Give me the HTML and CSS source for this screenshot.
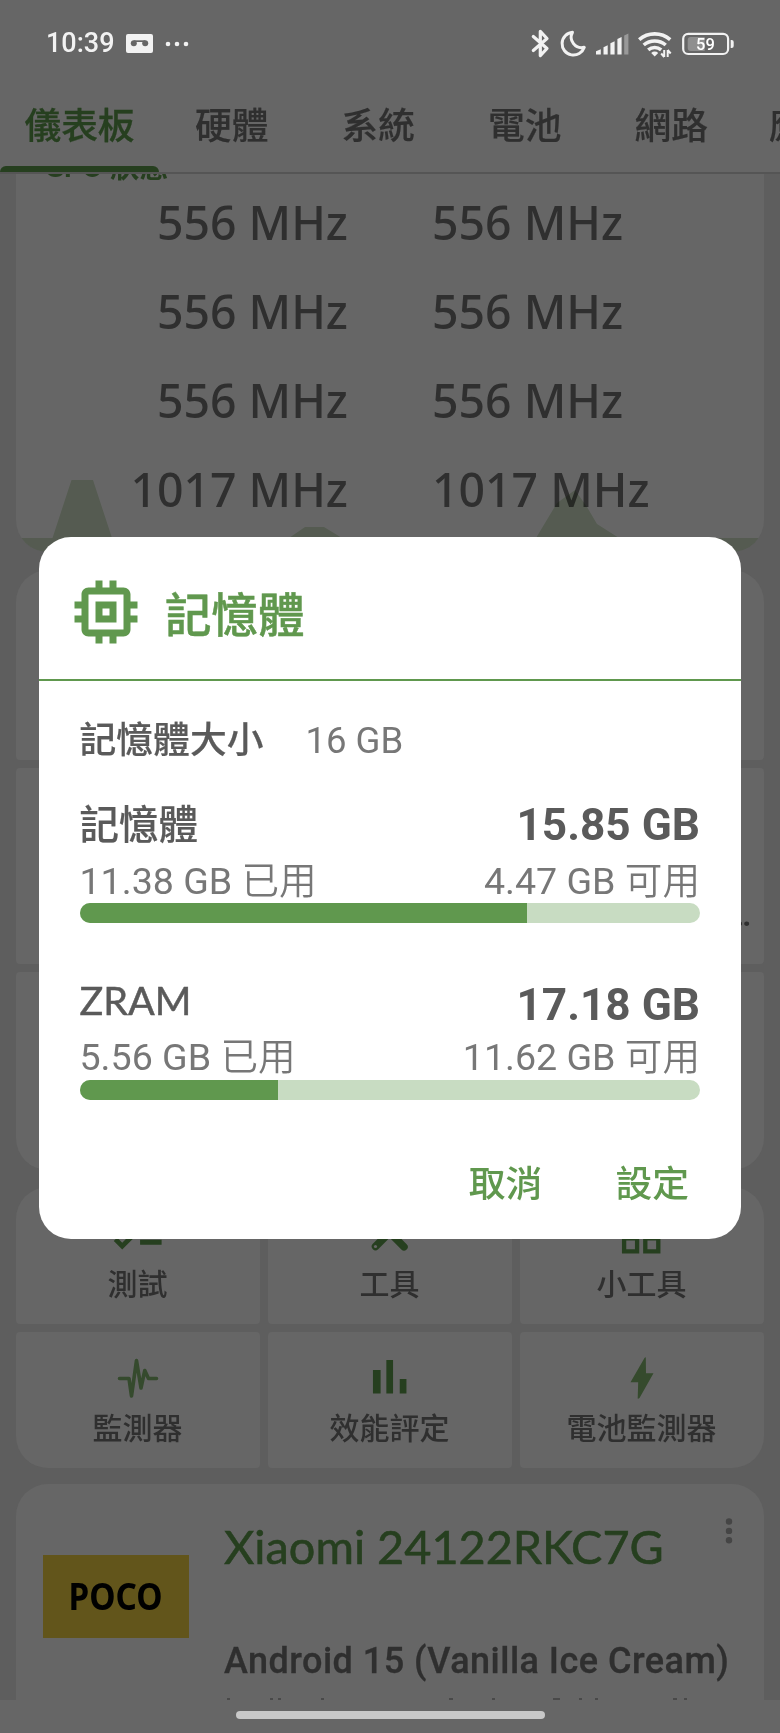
FILE: index.html
```html
<!DOCTYPE html>
<html lang="zh-Hant">
<head>
<meta charset="utf-8">
<title>記憶體</title>
<link rel="stylesheet" href="styles.css">
</head>
<body>
<div class="screen">
  <header class="statusbar">
    <span class="clock">10:39</span>
    <svg class="voicemail" width="27" height="19" viewBox="0 0 27 19"><rect width="27" height="19" rx="2" fill="#f2f2f2"/><g fill="#666"><circle cx="7.800" cy="9.300" r="3"/><circle cx="19.200" cy="9.300" r="3"/><path d="M7.800 6.300h11.400v1.700H7.800z"/></g></svg>
    <svg class="more" width="24" height="6" viewBox="0 0 24 6" fill="#f2f2f2"><circle cx="3" cy="3" r="2.300"/><circle cx="12" cy="3" r="2.300"/><circle cx="21" cy="3" r="2.300"/></svg>
    <svg class="tray" width="206" height="32" viewBox="0 0 206 32" fill="none">
      <path d="M4.300 8.500L18 20.500L11.300 27.600V3.400L18 10.500L4.300 22.500" stroke="#f2f2f2" stroke-width="3.200" stroke-linejoin="round" stroke-linecap="round"/>
      <path d="M43.500 4.300A11.400 11.400 0 1 0 55.300 19.300A10.400 10.400 0 0 1 43.500 4.300Z" stroke="#f2f2f2" stroke-width="3" stroke-linejoin="round"/>
      <path d="M67 26.500v-3.200l4.800-2v5.200zM74.500 26.500v-7.200l4.200-2v9.200zM81.400 26.500V15.300l4.200-2v13.200zM88.400 26.500V11l4.200-2v17.500z" fill="#f2f2f2"/>
      <path d="M95.200 26.500V7.600l4.200-2v20.900z" fill="#999"/>
      <g stroke="#f2f2f2" stroke-width="3.600"><path d="M110.200 11.700a23.500 23.500 0 0 1 31 0"/><path d="M114.700 17a17 17 0 0 1 22 0"/><path d="M119.200 21.800a10.500 10.500 0 0 1 13 0"/></g>
      <path d="M122.200 25a5 5 0 0 1 7 0L125.700 28.500z" fill="#f2f2f2"/>
      <path d="M135.200 29V22M132.200 25.500l3 3.500M138.700 22v7M138.700 22l3 3.500" stroke="#f2f2f2" stroke-width="2"/>
      <rect x="154.200" y="5.800" width="44.900" height="20.200" rx="5" stroke="#f2f2f2" stroke-width="2.200"/>
      <path d="M161.700 9h14v14h-14a3 3 0 0 1-3-3v-8a3 3 0 0 1 3-3z" fill="#8f8f8f"/>
      <path d="M201.700 12h1a2 2 0 0 1 2 2v4a2 2 0 0 1-2 2h-1z" fill="#f2f2f2"/>
      <text class="battery-text" x="176.400" y="22" text-anchor="middle">59</text>
    </svg>
  </header>
  <nav class="tabs">
    <div class="tab tab-active">儀表板</div>
    <div class="tab">硬體</div>
    <div class="tab">系統</div>
    <div class="tab">電池</div>
    <div class="tab">網路</div>
    <div class="tab tab-last">應用</div>
  </nav>
  <main class="content">
    <section class="card cpu">
      <h2 class="cpu-title"><span class="latin">CPU</span> 狀態</h2>
      <div class="cores">
        <span>556 MHz</span><span>556 MHz</span>
        <span>556 MHz</span><span>556 MHz</span>
        <span>556 MHz</span><span>556 MHz</span>
        <span>1017 MHz</span><span>1017 MHz</span>
      </div>
      <svg class="chart" width="748" height="82" viewBox="0 0 748 82"><path d="M0 67H36.500L55.500 9H77L96 67H273L289 56H308L326 67H520L541 32L559 19L571 36L581 53L603 67H748V82H0Z" fill="#d3e4c9"/></svg>
    </section>
    <section class="stack">
      <div class="card slot"></div>
      <div class="card slot slot-text">…</div>
      <div class="card slot"></div>
    </section>
    <section class="shortcuts">
      <div class="card shortcut"><svg class="icon" viewBox="0 0 24 24"><path d="M22 7h-9v2h9V7zm0 8h-9v2h9v-2zM5.540 11L2 7.460l1.410-1.410 2.120 2.120 4.240-4.240 1.410 1.410L5.540 11zm0 8L2 15.460l1.410-1.410 2.120 2.120 4.240-4.240 1.410 1.410L5.540 19z"/></svg><span>測試</span></div>
      <div class="card shortcut"><svg class="icon" viewBox="0 0 57.400 57.400"><path d="M14.500 42.500L43 14M43 42.800L15 14.500" stroke="#263f1f" stroke-width="7.500" stroke-linecap="round"/><circle cx="14.500" cy="42.500" r="1.600" fill="#666"/></svg><span>工具</span></div>
      <div class="card shortcut"><svg class="icon" viewBox="0 0 57.400 57.400"><path d="M11.100 13.400h13v13h-13zM32.300 13.400h13v13h-13zM11.100 34.400h13v13h-13zM32.300 34.400h13v13h-13z" fill="none" stroke="#263f1f" stroke-width="4.300"/></svg><span>小工具</span></div>
      <div class="card shortcut"><svg class="icon" viewBox="0 0 57.400 57.400"><path d="M10.500 30.500H20L22.500 48L27.500 12.500L32 40L35.800 22.500L39.500 30.500H47.500" fill="none" stroke="#354a2d" stroke-width="3.600" stroke-linejoin="round" stroke-linecap="round"/></svg><span>監測器</span></div>
      <div class="card shortcut"><svg class="icon" viewBox="0 0 24 24"><path d="M5 9.200h3.200V19H5zM10.600 5h2.800v14h-2.800zM16.200 13H19v6h-2.800z"/></svg><span>效能評定</span></div>
      <div class="card shortcut"><svg class="icon" viewBox="0 0 57.400 57.400"><path d="M31.500 10Q33 8.500 32.800 10.500L33 25.200H40.500L26.500 50Q24.500 51.500 24.700 50L25.200 34.200H17.500Z" fill="#354a2d"/></svg><span>電池監測器</span></div>
    </section>
    <section class="card device">
      <svg class="brand" width="146" height="83" viewBox="0 0 146 83"><rect width="146" height="83" fill="#62551b"/><text class="brand-text" x="25.500" y="55" textLength="94" lengthAdjust="spacingAndGlyphs">POCO</text></svg>
      <div class="device-info">
        <div class="device-name">Xiaomi 24122RKC7G</div>
        <div class="device-os">Android 15 (Vanilla Ice Cream)</div>
        <svg class="cut-line" width="500" height="2" viewBox="0 0 500 2"><path d="M3 1h3M46 1h3M54 1h3M97 1h3M225 1h4M268 1h3M329 1h7M355 1h3M371 1h3M449 1h4M460 1h3" stroke="#404040" stroke-width="1.500"/></svg>
      </div>
      <svg class="menu" width="8" height="28" viewBox="0 0 8 28" fill="#454545"><circle cx="4" cy="4.500" r="3.200"/><circle cx="4" cy="13.900" r="3.200"/><circle cx="4" cy="23.300" r="3.200"/></svg>
    </section>
  </main>
  <footer class="navbar"><div class="handle"></div></footer>

  <div class="dialog" role="dialog">
    <div class="dialog-head">
      <svg class="chip" width="84" height="84" viewBox="0 0 24 24"><path d="M15 9H9v6h6V9zm-2 4h-2v-2h2v2zm8-2V9h-2V7c0-1.100-.9-2-2-2h-2V3h-2v2h-2V3H9v2H7c-1.100 0-2 .9-2 2v2H3v2h2v2H3v2h2v2c0 1.100.9 2 2 2h2v2h2v-2h2v2h2v-2h2c1.100 0 2-.9 2-2v-2h2v-2h-2v-2h2zm-4 6H7V7h10v10z"/></svg>
      <span class="dialog-title">記憶體</span>
    </div>
    <div class="dialog-body">
      <div class="size-row"><span class="size-label">記憶體大小</span><span class="size-value">16 GB</span></div>
      <div class="meter meter-ram">
        <div class="meter-top"><span class="meter-name">記憶體</span><span class="meter-total">15.85 GB</span></div>
        <div class="meter-mid"><span>11.38 GB <span class="unit">已用</span></span><span>4.47 GB <span class="unit">可用</span></span></div>
        <div class="track"><div class="fill" style="width:72.1%"></div></div>
      </div>
      <div class="meter meter-zram">
        <div class="meter-top"><span class="meter-name meter-latin">ZRAM</span><span class="meter-total">17.18 GB</span></div>
        <div class="meter-mid"><span>5.56 GB <span class="unit">已用</span></span><span>11.62 GB <span class="unit">可用</span></span></div>
        <div class="track"><div class="fill" style="width:32%"></div></div>
      </div>
    </div>
    <div class="actions"><span>取消</span><span>設定</span></div>
  </div>
</div>
</body>
</html>
```

FILE: styles.css
```css
* { box-sizing: border-box; }
body { margin: 0; }
.screen {
  position: relative;
  display: flex;
  flex-direction: column;
  width: 780px;
  height: 1733px;
  overflow: hidden;
  background: #666;
  color: #2f2f2f;
  font-family: "Noto Sans CJK TC", sans-serif;
}
.statusbar {
  display: flex;
  align-items: center;
  height: 80px;
  padding: 7px 45px 0 46px;
  flex: none;
}
.clock {
  width: 80px;
  font: 500 27px/31px Roboto, sans-serif;
  color: #f2f2f2;
}
.voicemail { margin-right: 12px; }
.tray { margin-left: auto; }
.battery-text { font: 500 16.500px Roboto, sans-serif; fill: #fff; }
.tabs {
  display: flex;
  height: 94px;
  flex: none;
  border-bottom: 2px solid #555;
}
.tab {
  flex: none;
  min-width: 146.500px;
  padding: 0 25px 0 24px;
  text-align: center;
  white-space: nowrap;
  font-size: 36.700px;
  font-weight: 500;
  line-height: 86px;
  -webkit-text-stroke: 0.2px currentColor;
}
.tab-last { text-align: left; }
.tab-active {
  display: flex;
  flex-direction: column;
  justify-content: space-between;
  padding: 0;
  width: 159px;
  color: #263f1f;
  -webkit-text-stroke-width: 0.3px;
}
.tab-active::after {
  content: "";
  height: 6px;
  border-radius: 7px 7px 0 0;
  background: #263f1f;
}
.content {
  display: flex;
  flex-direction: column;
  height: 1526px;
  flex: none;
  padding: 0 16px;
  overflow: hidden;
  background: #5e5e5e;
}
.card { background: #666; border-radius: 4px; flex: none; }
.cpu {
  display: flex;
  flex-direction: column;
  height: 378px;
  border-radius: 0 0 32px 32px;
  overflow: hidden;
}
.cpu-title {
  height: 30px;
  margin: -27px 0 0 28px;
  flex: none;
  color: #263f1f;
  font-size: 29.300px;
  font-weight: 700;
  line-height: 35px;
}
.latin { font-family: Lato, sans-serif; }
.cores {
  display: grid;
  grid-template-columns: 332px 332px;
  column-gap: 84px;
  grid-auto-rows: 88.900px;
  font: 500 46.400px/90px "Noto Sans", sans-serif;
}
.cores span:nth-child(odd) { text-align: right; }
.chart { margin-top: -62px; flex: none; mix-blend-mode: multiply; }
.stack {
  display: flex;
  flex-direction: column;
  gap: 8px;
  padding: 18px 0 17px;
}
.slot { height: 198px; }
.slot:first-child { height: 190px; border-radius: 32px 32px 4px 4px; }
.slot:last-child { border-radius: 4px 4px 32px 32px; }
.slot-text {
  height: 196px;
  padding: 128px 13px 0 0;
  text-align: right;
  font: 700 31px/40px Roboto, sans-serif;
}
.shortcuts {
  display: grid;
  grid-template-columns: repeat(3, 1fr);
  grid-auto-rows: 136.500px;
  gap: 8px;
  flex: none;
}
.shortcut {
  display: flex;
  flex-direction: column;
  align-items: center;
  padding-top: 16.500px;
  padding-right: 1px;
  font-size: 30px;
  font-weight: 500;
  line-height: 42px;
}
.shortcut:nth-child(1) { border-top-left-radius: 32px; }
.shortcut:nth-child(3) { border-top-right-radius: 32px; }
.shortcut:nth-child(4) { border-bottom-left-radius: 32px; }
.shortcut:nth-child(6) { border-bottom-right-radius: 32px; }
.icon { width: 57.400px; height: 57.400px; fill: #263f1f; }
.device {
  display: flex;
  height: 260px;
  margin-top: 16px;
  padding-left: 27px;
  border-radius: 32px 32px 0 0;
}
.brand { margin-top: 71px; }
.brand-text { font: 700 38px "Noto Sans", sans-serif; }
.device-info { width: 520px; padding: 30px 0 0 35px; white-space: nowrap; }
.device-name {
  font: 400 46.800px/64px Lato, sans-serif;
  color: #263f1f;
  -webkit-text-stroke: 0.6px currentColor;
}
.device-os {
  margin-top: 62px;
  font: 500 36px/42px Roboto, sans-serif;
  letter-spacing: 0.470px;
  -webkit-text-stroke: 0.3px currentColor;
}
.cut-line { display: block; margin-top: 16px; }
.menu { margin: 33px 0 0 16px; }
.navbar { display: flex; flex: none; justify-content: center; height: 33px; padding-top: 11px; }
.handle { width: 309px; height: 8px; border-radius: 4px; background: #c8c8c8; }

.dialog {
  position: absolute;
  left: 39px;
  top: 537px;
  width: 702px;
  height: 701.500px;
  border-radius: 32px;
  overflow: hidden;
  background: #fff;
  color: #5a5a5a;
}
.dialog-head {
  display: flex;
  align-items: center;
  height: 144px;
  padding: 8px 0 0 25px;
  border-bottom: 2px solid #60984e;
}
.chip { fill: #60984e; margin-right: 17px; }
.dialog-title {
  color: #60984e;
  font-size: 46.500px;
  font-weight: 500;
  line-height: 60px;
  -webkit-text-stroke: 0.5px currentColor;
}
.dialog-body { padding: 31px 41px 0 40.500px; }
.size-row { display: flex; align-items: center; height: 50px; line-height: 50px; }
.size-label { width: 226px; font-size: 36.800px; font-weight: 500; -webkit-text-stroke: 0.2px currentColor; }
.size-value { font: 400 36.500px/50px Roboto, sans-serif; color: #777; padding-top: 7px; }
.meter-top { display: flex; justify-content: space-between; height: 50px; line-height: 50px; }
.meter-ram { margin-top: 37px; }
.meter-zram { margin-top: 56.500px; }
.meter-name { font-size: 39.500px; font-weight: 500; line-height: 46px; -webkit-text-stroke: 0.2px currentColor; }
.meter-latin { font-family: Lato, sans-serif; font-weight: 400; line-height: 40px; -webkit-text-stroke-width: 0.5px; }
.meter-total { font: 700 44.200px/51px Roboto, sans-serif; }
.meter-ram .meter-total { line-height: 52px; }
.meter-mid {
  display: flex;
  justify-content: space-between;
  margin-top: 7.500px;
  height: 46.500px;
  font: 400 37.600px/48px Roboto, "Noto Sans CJK TC", sans-serif;
  color: #777;
}
.meter-zram .meter-mid { margin-top: 3.500px; }
.unit { font-weight: 350; }
.track { height: 20px; border-radius: 10px; overflow: hidden; background: #c8dcc2; }
.fill { height: 100%; background: #60984e; }
.actions {
  display: flex;
  justify-content: flex-end;
  gap: 73px;
  padding: 53px 52px 0 0;
  color: #60984e;
  font-size: 36.800px;
  font-weight: 500;
  line-height: 56px;
}
```
